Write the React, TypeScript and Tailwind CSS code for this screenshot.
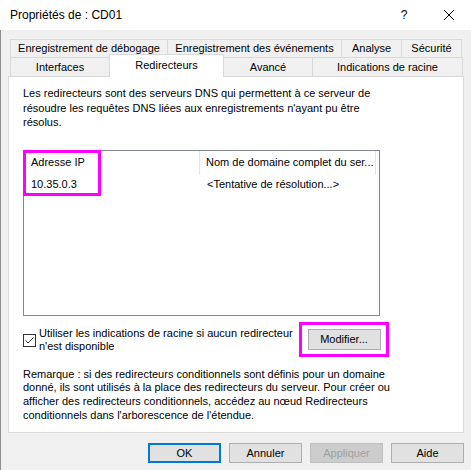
import React from "react";

const font = { fontFamily: '"Liberation Sans", Arial, sans-serif' };

const row1 = [
  { label: "Enregistrement de débogage", w: "w-[158px]" },
  { label: "Enregistrement des événements", w: "w-[174px]" },
  { label: "Analyse", w: "w-[60px]" },
  { label: "Sécurité", w: "w-[60px]" },
];

function Btn({ label, primary, disabled }: { label: string; primary?: boolean; disabled?: boolean }) {
  return (
    <div
      className={
        "w-[73px] h-[20px] flex items-center justify-center " +
        (primary ? "border-2 border-[#0078d7] bg-[#e1e1e1]" : "border ") +
        (disabled ? "text-[#a0a0a0] bg-[#cccccc] border-[#bfbfbf]" : primary ? "" : "bg-[#e1e1e1] border-[#adadad]")
      }
    >
      {label}
    </div>
  );
}

export default function App() {
  return (
    <div className="w-[471px] h-[470px] bg-[#f0f0f0] flex flex-col text-[11px] text-black overflow-hidden" style={font}>
      {/* title bar */}
      <div className="h-[30px] bg-white flex items-center pl-[10px] pr-[14px] text-[12px] shrink-0">
        <span className="flex-1">Propriétés de : CD01</span>
        <span className="w-[14px] text-center mr-[32px]">?</span>
        <svg width="12" height="12" viewBox="0 0 12 12" className="mr-[2px]">
          <path d="M1 1 L11 11 M11 1 L1 11" stroke="#000" strokeWidth="1" />
        </svg>
      </div>

      <div className="flex-1 border-l border-[#8c8c8c] flex flex-col pl-[7px] pr-[7px]">
        {/* tabs */}
        <div className="ml-[2px] mt-[9px] flex flex-col">
          <div className="flex h-[18px]">
            {row1.map((t, i) => (
              <div
                key={t.label}
                className={
                  t.w +
                  " h-full flex items-center justify-center whitespace-nowrap border-t border-r border-[#d9d9d9] " +
                  (i === 0 ? "border-l" : "")
                }
              >
                {t.label}
              </div>
            ))}
          </div>
          <div className="flex h-[19px] items-end">
            <div className="w-[99px] h-full flex items-center justify-center border-t border-l border-[#d9d9d9]">
              Interfaces
            </div>
            <div className="relative z-10 w-[115px] h-[23px] -mb-[1px] bg-white flex items-center justify-center pb-[2px] border-t border-l border-r border-[#d9d9d9]">
              Redirecteurs
            </div>
            <div className="w-[88px] h-full flex items-center justify-center border-t border-[#d9d9d9]">Avancé</div>
            <div className="w-[151px] h-full flex items-center justify-center border-t border-l border-r border-[#d9d9d9]">
              Indications de racine
            </div>
          </div>
        </div>

        {/* panel */}
        <div className="h-[357px] bg-white border border-[#d9d9d9] pl-[14px] pt-[9px] relative">
          <p className="leading-[14.5px] whitespace-nowrap">
            Les redirecteurs sont des serveurs DNS qui permettent à ce serveur de
            <br />
            résoudre les requêtes DNS liées aux enregistrements n'ayant pu être
            <br />
            résolus.
          </p>

          <div className="mt-[20px] w-[357px] h-[166px] border border-[#828790] relative">
            <div className="flex h-[24px]">
              <div className="w-[176px] h-full flex items-center pl-[7px] border-r border-[#e5e5e5]">Adresse IP</div>
              <div className="w-[176px] h-full flex items-center pl-[6px] border-r border-[#e5e5e5] whitespace-nowrap">
                Nom de domaine complet du ser...
              </div>
            </div>
            <div className="flex h-[20px] items-center">
              <div className="w-[176px] pl-[7px]">10.35.0.3</div>
              <div className="pl-[7px]">&lt;Tentative de résolution...&gt;</div>
            </div>
            <div className="absolute -left-[1px] -top-[1px] w-[78px] h-[46px] border-[3px] border-[#ff00ff]" />
          </div>

          <div className="flex mt-[4px] h-[39px] items-center">
            <div className="w-[276px] flex items-center pt-[2px]">
              <div className="w-[13px] h-[13px] border border-[#333] flex items-center justify-center mr-[3px] shrink-0">
                <svg width="11" height="11" viewBox="0 0 11 11">
                  <path d="M1.5 5.5 L4 8 L9.5 2.5" stroke="#333" strokeWidth="1" fill="none" />
                </svg>
              </div>
              <span className="leading-[13px] whitespace-nowrap">
                Utiliser les indications de racine si aucun redirecteur
                <br />
                n'est disponible
              </span>
            </div>
            <div className="w-[90px] h-[35px] border-[3px] border-[#ff00ff] flex items-center justify-center pt-[1px]">
              <div className="w-[73px] h-[21px] bg-[#e1e1e1] border border-[#adadad] flex items-center justify-center">
                Modifier...
              </div>
            </div>
          </div>

          <p className="mt-[9px] leading-[13.7px] whitespace-nowrap">
            Remarque : si des redirecteurs conditionnels sont définis pour un domaine
            <br />
            donné, ils sont utilisés à la place des redirecteurs du serveur. Pour créer ou
            <br />
            afficher des redirecteurs conditionnels, accédez au nœud Redirecteurs
            <br />
            conditionnels dans l'arborescence de l'étendue.
          </p>
        </div>

        {/* buttons */}
        <div className="flex justify-end gap-[8px] mt-[10px]">
          <Btn label="OK" primary />
          <Btn label="Annuler" />
          <Btn label="Appliquer" disabled />
          <Btn label="Aide" />
        </div>
      </div>
    </div>
  );
}
